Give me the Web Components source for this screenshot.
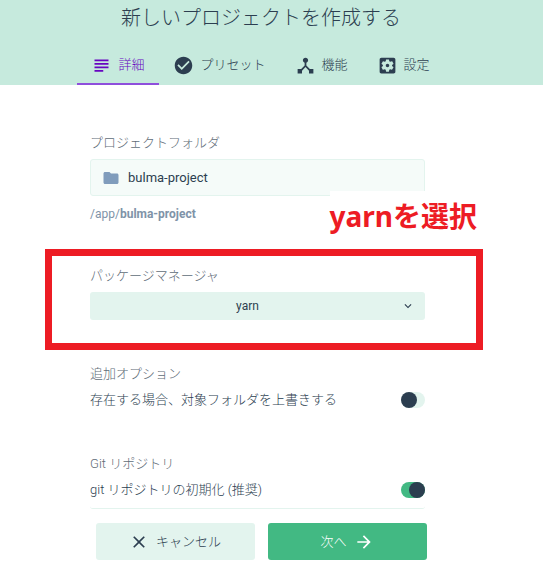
<!DOCTYPE html>
<html lang="ja">
<head>
<meta charset="utf-8">
<meta name="viewport" content="width=device-width, initial-scale=1">
<title>新しいプロジェクトを作成する</title>
<style>
  body {
    margin: 0;
    background: #fff;
    color: #2c3e50;
    font-family: Roboto, "Noto Sans CJK JP", sans-serif;
    font-size: 13px;
    font-weight: 400;
    line-height: 20px;
    --accent: #42b983;
    --accent-soft: #e3f4ee;
    --accent-pale: #f5fbf9;
    --header: #c6eadd;
    --dark: #2c3e50;
    --muted: #5f6d78;
    --purple: #6806c1;
    --mark: #ed1c24;
    --jp-weight: 300;
  }
</style>
</head>
<body>
<project-create></project-create>

<script>
const icons = {
  subject: '<path d="M4 5h16v2H4zM4 9h16v2H4zM4 13h16v2H4zM4 17h10v2H4z"/>',
  check: '<path d="M12 2C6.480 2 2 6.480 2 12s4.480 10 10 10 10-4.480 10-10S17.520 2 12 2zm-2 15l-5-5 1.410-1.410L10 14.170l7.590-7.590L19 8l-9 9z"/>',
  hub: '<path d="M17 16l-4-4V8.820C14.160 8.400 15 7.300 15 6c0-1.660-1.340-3-3-3S9 4.340 9 6c0 1.300.84 2.400 2 2.820V12l-4 4H3v5h5v-3.050l4-4.200 4 4.200V21h5v-5h-4z"/>',
  settings: '<path d="M12 10c-1.100 0-2 .9-2 2s.9 2 2 2 2-.9 2-2-.9-2-2-2zm7-7H5c-1.110 0-2 .9-2 2v14c0 1.100.89 2 2 2h14c1.110 0 2-.9 2-2V5c0-1.100-.89-2-2-2zm-1.750 9c0 .23-.02.46-.05.68l1.480 1.160c.13.11.17.3.08.45l-1.400 2.420c-.09.15-.27.21-.43.15l-1.740-.7c-.36.28-.76.51-1.180.69l-.26 1.850c-.03.17-.18.3-.35.3h-2.800c-.17 0-.32-.13-.35-.29l-.26-1.850c-.43-.18-.82-.41-1.180-.69l-1.740.7c-.16.06-.34 0-.43-.15l-1.400-2.420c-.09-.15-.05-.34.08-.45l1.480-1.160c-.03-.23-.05-.46-.05-.69s.02-.46.05-.68l-1.480-1.160c-.13-.11-.17-.3-.08-.45l1.400-2.420c.09-.15.27-.21.43-.15l1.740.7c.36-.28.76-.51 1.180-.69l.26-1.850c.03-.17.18-.3.35-.3h2.800c.17 0 .32.13.35.29l.26 1.850c.43.18.82.41 1.180.69l1.740-.7c.16-.06.34 0 .43.15l1.400 2.420c.09.15.05.34-.08.45l-1.480 1.160c.03.23.05.46.05.69z"/>',
  folder: '<path d="M10 4H4c-1.100 0-2 .9-2 2v12c0 1.100.9 2 2 2h16c1.100 0 2-.9 2-2V8c0-1.100-.9-2-2-2h-8l-2-2z"/>',
  chevron: '<path d="M7.410 8.590L12 13.170l4.590-4.580L18 10l-6 6-6-6z"/>',
  close: '<path d="M19 6.410L17.590 5 12 10.590 6.410 5 5 6.410 10.590 12 5 17.590 6.410 19 12 13.410 17.590 19 19 17.590 13.410 12z"/>',
  forward: '<path d="M12 4l-1.410 1.410L16.170 11H4v2h12.170l-5.580 5.590L12 20l8-8z"/>',
};

const labelStyle = `
  .label {
    display: block;
    color: var(--muted);
    font-weight: var(--jp-weight);
  }
`;

class AppIcon extends HTMLElement {
  constructor() {
    super();
    this.attachShadow({ mode: "open" });
  }

  connectedCallback() {
    this.shadowRoot.innerHTML = `
      <style>
        :host { display: block; flex: none; width: 21px; height: 21px; }
        svg { display: block; width: 100%; height: 100%; fill: currentColor; }
      </style>
      <svg viewBox="0 0 24 24" aria-hidden="true">${icons[this.getAttribute("name")]}</svg>
    `;
  }
}

class WizardHeader extends HTMLElement {
  constructor() {
    super();
    this.attachShadow({ mode: "open" });
    this.shadowRoot.innerHTML = `
      <style>
        :host { display: block; background: var(--header); padding-right: 21px; }
        h1 {
          margin: 0;
          padding: 2px 0 13px;
          font-size: 20px;
          font-weight: var(--jp-weight);
          line-height: 32px;
          text-align: center;
        }
        nav { display: flex; justify-content: center; }
      </style>
      <h1><slot name="title"></slot></h1>
      <nav><slot></slot></nav>
    `;
  }
}

class WizardTab extends HTMLElement {
  constructor() {
    super();
    this.attachShadow({ mode: "open" });
  }

  connectedCallback() {
    this.shadowRoot.innerHTML = `
      <style>
        :host { display: block; }
        a {
          display: flex;
          align-items: center;
          gap: 6px;
          height: 36px;
          padding: 0 15px 0 14px;
          border-bottom: 2px solid transparent;
          color: inherit;
          font-weight: var(--jp-weight);
          text-decoration: none;
        }
        :host([active]) a { color: var(--purple); border-color: #8f4fdc; }
      </style>
      <a href="#${this.getAttribute("icon")}">
        <app-icon name="${this.getAttribute("icon")}"></app-icon>
        <span><slot></slot></span>
      </a>
    `;
  }
}

class FolderField extends HTMLElement {
  constructor() {
    super();
    this.attachShadow({ mode: "open" });
  }

  connectedCallback() {
    const value = this.getAttribute("value");
    this.shadowRoot.innerHTML = `
      <style>
        ${labelStyle}
        :host { display: block; }
        .box {
          display: flex;
          align-items: center;
          gap: 8px;
          height: 35px;
          margin: 6px 0 8px;
          padding: 0 11px;
          border: 1px solid var(--accent-soft);
          border-radius: 3px;
          background: var(--accent-pale);
        }
        app-icon { width: 18px; height: 18px; color: #809cbc; }
        input {
          flex: 1;
          min-width: 0;
          padding: 0;
          border: 0;
          outline: 0;
          background: none;
          color: inherit;
          font: inherit;
        }
        .path { color: #8093a8; font-size: 12px; }
      </style>
      <label class="label" for="folder">${this.getAttribute("label")}</label>
      <div class="box">
        <app-icon name="folder"></app-icon>
        <input id="folder" type="text" value="${value}">
      </div>
      <div class="path">/app/<b>${value}</b></div>
    `;
  }
}

class SelectField extends HTMLElement {
  constructor() {
    super();
    this.attachShadow({ mode: "open" });
  }

  connectedCallback() {
    const options = this.getAttribute("options").split(",");
    this.shadowRoot.innerHTML = `
      <style>
        ${labelStyle}
        :host { display: block; }
        .box { display: grid; align-items: center; margin-top: 6px; }
        select, app-icon { grid-area: 1 / 1; }
        select {
          appearance: none;
          width: 100%;
          height: 28px;
          padding: 0 34px 0 14px;
          border: 0;
          border-radius: 3px;
          background: var(--accent-soft);
          color: inherit;
          font: inherit;
          font-size: 12px;
          text-align: center;
          text-align-last: center;
        }
        app-icon {
          justify-self: end;
          width: 14px;
          height: 14px;
          margin-right: 10px;
          pointer-events: none;
        }
      </style>
      <label class="label" for="select">${this.getAttribute("label")}</label>
      <div class="box">
        <select id="select">
          ${options.map((option) => `<option>${option}</option>`).join("")}
        </select>
        <app-icon name="chevron"></app-icon>
      </div>
    `;
  }
}

class SwitchField extends HTMLElement {
  constructor() {
    super();
    this.attachShadow({ mode: "open" });
  }

  connectedCallback() {
    this.shadowRoot.innerHTML = `
      <style>
        ${labelStyle}
        :host { display: block; }
        .row {
          display: flex;
          align-items: center;
          justify-content: space-between;
          margin-top: 6px;
          font-weight: var(--jp-weight);
        }
        input {
          appearance: none;
          display: flex;
          flex: none;
          width: 24px;
          height: 16px;
          margin: 0;
          border-radius: 8px;
          background: var(--accent-soft);
        }
        input::before {
          content: "";
          width: 16px;
          height: 16px;
          border-radius: 50%;
          background: var(--dark);
        }
        input:checked { justify-content: flex-end; background: var(--accent); }
      </style>
      <span class="label">${this.getAttribute("label")}</span>
      <div class="row">
        <label for="switch"><slot></slot></label>
        <input id="switch" type="checkbox" ${this.hasAttribute("checked") ? "checked" : ""}>
      </div>
    `;
  }
}

// Red frame with a note, drawn over whatever is slotted in
class NoteFrame extends HTMLElement {
  constructor() {
    super();
    this.attachShadow({ mode: "open" });
    this.shadowRoot.innerHTML = `
      <style>
        :host { display: block; position: relative; }
        .frame {
          position: absolute;
          inset: -17px -58px -30px -45px;
          border: 7px solid var(--mark);
          pointer-events: none;
        }
        .note {
          position: absolute;
          right: -52px;
          bottom: 100%;
          margin-bottom: 25px;
          background: #fff;
          color: var(--mark);
          font: bold 28px/50px "Noto Sans", "Noto Sans CJK JP", sans-serif;
          white-space: nowrap;
        }
      </style>
      <slot></slot>
      <div class="frame"></div>
      <div class="note"><slot name="note"></slot></div>
    `;
  }
}

class ActionButton extends HTMLElement {
  constructor() {
    super();
    this.attachShadow({ mode: "open" });
    this.shadowRoot.innerHTML = `
      <style>
        :host { display: block; flex: 1; }
        button {
          display: flex;
          align-items: center;
          justify-content: center;
          gap: 7px;
          width: 100%;
          height: 37px;
          padding: 0;
          border: 0;
          border-radius: 3px;
          background: var(--accent-soft);
          color: inherit;
          font: inherit;
          font-weight: var(--jp-weight);
        }
        ::slotted(app-icon) { width: 20px; height: 20px; }
        :host([primary]) button { background: var(--accent); color: #fff; }
      </style>
      <button type="button">
        <slot name="before"></slot>
        <span><slot></slot></span>
        <slot name="after"></slot>
      </button>
    `;
  }
}

class ProjectCreate extends HTMLElement {
  constructor() {
    super();
    this.attachShadow({ mode: "open" });
    this.shadowRoot.innerHTML = `
      <style>
        :host { display: block; }
        main { padding: 48px 28px 0 0; }
        form {
          display: flex;
          flex-direction: column;
          max-width: 335px;
          margin: 0 auto;
          padding-bottom: 8px;
          border-bottom: 1px solid var(--accent-soft);
          border-radius: 3px;
        }
        note-frame { margin: 42px 0 44px; }
        switch-field + switch-field { margin-top: 44px; }
        footer { padding: 14px 21px 5px 0; }
        .actions { display: flex; gap: 13px; max-width: 331px; margin: 0 auto; }
      </style>
      <wizard-header>
        <span slot="title">新しいプロジェクトを作成する</span>
        <wizard-tab icon="subject" active>詳細</wizard-tab>
        <wizard-tab icon="check">プリセット</wizard-tab>
        <wizard-tab icon="hub">機能</wizard-tab>
        <wizard-tab icon="settings">設定</wizard-tab>
      </wizard-header>
      <main>
        <form>
          <folder-field label="プロジェクトフォルダ" value="bulma-project"></folder-field>
          <note-frame>
            <select-field label="パッケージマネージャ" options="yarn,npm"></select-field>
            <span slot="note">yarnを選択</span>
          </note-frame>
          <switch-field label="追加オプション">存在する場合、対象フォルダを上書きする</switch-field>
          <switch-field label="Git リポジトリ" checked>git リポジトリの初期化 (推奨)</switch-field>
        </form>
      </main>
      <footer>
        <div class="actions">
          <action-button><app-icon slot="before" name="close"></app-icon>キャンセル</action-button>
          <action-button primary>次へ<app-icon slot="after" name="forward"></app-icon></action-button>
        </div>
      </footer>
    `;
  }
}

customElements.define("app-icon", AppIcon);
customElements.define("wizard-header", WizardHeader);
customElements.define("wizard-tab", WizardTab);
customElements.define("folder-field", FolderField);
customElements.define("select-field", SelectField);
customElements.define("switch-field", SwitchField);
customElements.define("note-frame", NoteFrame);
customElements.define("action-button", ActionButton);
customElements.define("project-create", ProjectCreate);
</script>
</body>
</html>
